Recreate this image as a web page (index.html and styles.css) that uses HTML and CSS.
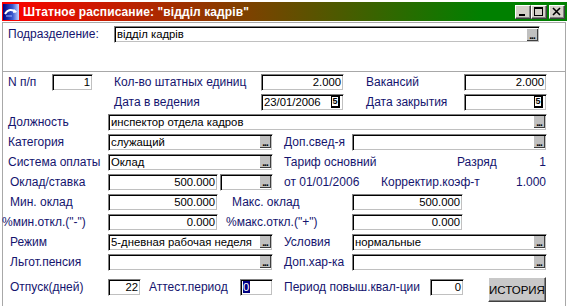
FILE: index.html
```html
<!DOCTYPE html>
<html>
<head>
<meta charset="utf-8">
<link rel="stylesheet" href="styles.css">
</head>
<body>
<div class="window">
  <div class="titlebar">
    <svg class="appicon" width="16" height="16" viewBox="0 0 16 16">
      <defs>
        <linearGradient id="ig" x1="0" y1="0" x2="1" y2="0">
          <stop offset="0" stop-color="#000080"/>
          <stop offset="0.6" stop-color="#3a5ad0"/>
          <stop offset="1" stop-color="#c8d4ff"/>
        </linearGradient>
      </defs>
      <rect x="0" y="0" width="16" height="16" fill="url(#ig)"/>
      <path d="M2 10 C5 5, 9 5, 13 8" stroke="#fff" stroke-width="2" fill="none"/>
      <path d="M11 5 L14 8 L10 9 Z" fill="#fff"/>
      <path d="M3 12 L9 12" stroke="#a0b4ff" stroke-width="1"/>
    </svg>
    <span class="title">Штатное расписание: "відділ кадрів"</span>
    <div class="wbtns">
      <span class="wbtn"><svg width="14" height="12" viewBox="0 0 14 12"><rect x="3" y="8" width="6" height="2" fill="#000"/></svg></span>
      <span class="wbtn"><svg width="14" height="12" viewBox="0 0 14 12"><rect x="2.5" y="1.5" width="8" height="8" fill="none" stroke="#000"/><rect x="2" y="1" width="9" height="2" fill="#000"/></svg></span>
      <span class="wbtn close"><svg width="14" height="12" viewBox="0 0 14 12"><path d="M3 2 L10 9 M10 2 L3 9" stroke="#000" stroke-width="1.6"/></svg></span>
    </div>
  </div>
  <div class="form">
    <div class="top">
      <span></span>
      <span class="lbl">Подразделение:</span>
      <div class="inp tinp"><span class="txt">відділ кадрів</span><span class="dots">...</span></div>
    </div>

    <div class="row r1">
      <span></span>
      <span class="lbl">N п/п</span>
      <div class="inp num"><span class="txt">1</span></div>
      <span></span>
      <span class="lbl">Кол-во штатных единиц</span>
      <div class="inp num"><span class="txt">2.000</span></div>
      <span></span>
      <span class="lbl">Вакансий</span>
      <div class="inp num"><span class="txt">2.000</span></div>
    </div>

    <div class="row r2">
      <span></span>
      <span class="lbl">Дата в ведения</span>
      <div class="inp"><span class="txt">23/01/2006</span><span class="cal">5</span></div>
      <span></span>
      <span class="lbl">Дата закрытия</span>
      <div class="inp"><span class="txt"></span><span class="cal">5</span></div>
    </div>

    <div class="row r3">
      <span></span>
      <span class="lbl">Должность</span>
      <div class="inp"><span class="txt">инспектор отдела кадров</span><span class="dots">...</span></div>
    </div>

    <div class="row r4">
      <span></span>
      <span class="lbl">Категория</span>
      <div class="inp"><span class="txt">служащий</span><span class="dots">...</span></div>
      <span></span>
      <span class="lbl">Доп.свед-я</span>
      <div class="inp"><span class="txt"></span><span class="dots">...</span></div>
    </div>

    <div class="row r5">
      <span></span>
      <span class="lbl">Система оплаты</span>
      <div class="inp"><span class="txt">Оклад</span><span class="dots">...</span></div>
      <span></span>
      <span class="lbl">Тариф основний</span>
      <span class="lbl">Разряд</span>
      <span class="lbl right">1</span>
    </div>

    <div class="row r6">
      <span></span>
      <span class="lbl">Оклад/ставка</span>
      <div class="inp num"><span class="txt">500.000</span></div>
      <span></span>
      <div class="inp"><span class="txt"></span><span class="dots">...</span></div>
      <span></span>
      <span class="lbl">от 01/01/2006</span>
      <span class="lbl">Корректир.коэф-т</span>
      <span class="lbl right">1.000</span>
    </div>

    <div class="row r7">
      <span></span>
      <span class="lbl">Мин. оклад</span>
      <div class="inp num"><span class="txt">500.000</span></div>
      <span></span>
      <span class="lbl">Макс. оклад</span>
      <div class="inp num"><span class="txt">500.000</span></div>
    </div>

    <div class="row r8">
      <span class="lbl pct">%мин.откл.("-")</span>
      <div class="inp num"><span class="txt">0.000</span></div>
      <span></span>
      <span class="lbl">%макс.откл.("+")</span>
      <div class="inp num"><span class="txt">0.000</span></div>
    </div>

    <div class="row r9">
      <span></span>
      <span class="lbl">Режим</span>
      <div class="inp"><span class="txt">5-дневная рабочая неделя</span><span class="dots">...</span></div>
      <span></span>
      <span class="lbl">Условия</span>
      <div class="inp"><span class="txt">нормальные</span><span class="dots">...</span></div>
    </div>

    <div class="row r9">
      <span></span>
      <span class="lbl">Льгот.пенсия</span>
      <div class="inp"><span class="txt"></span><span class="dots">...</span></div>
      <span></span>
      <span class="lbl">Доп.хар-ка</span>
      <div class="inp"><span class="txt"></span><span class="dots">...</span></div>
    </div>

    <div class="row r11">
      <span></span>
      <span class="lbl">Отпуск(дней)</span>
      <div class="inp num"><span class="txt">22</span></div>
      <span></span>
      <span class="lbl">Аттест.период</span>
      <div class="inp"><span class="txt"><span class="sel">0</span></span></div>
      <span></span>
      <span class="lbl">Период повыш.квал-ции</span>
      <div class="inp num"><span class="txt">0</span></div>
      <span></span>
      <button class="hist">ИСТОРИЯ</button>
    </div>
  </div>
</div>
</body>
</html>
```

FILE: styles.css
```css
* { box-sizing: border-box; }
html, body {
  margin: 0;
  padding: 0;
  width: 568px;
  height: 306px;
  overflow: hidden;
  background: #fff;
}
body {
  font-family: "Liberation Sans", Arial, sans-serif;
  font-size: 12px;
  color: #000;
}
.window {
  margin: 2px 0 0 2px;
  width: 565px;
}
.titlebar {
  height: 19px;
  display: flex;
  align-items: center;
  padding: 0 2px 0 1px;
  margin-bottom: 1px;
  background: linear-gradient(to right, #ff0000 0%, #008000 85%, #008000 100%);
}
.appicon { flex: none; display: block; }
.title {
  margin-left: 4px;
  color: #fff;
  font-weight: bold;
  font-size: 12px;
  letter-spacing: 0.1px;
  white-space: nowrap;
  flex: 1;
}
.wbtns { display: flex; gap: 0; }
.wbtn {
  width: 16px;
  height: 14px;
  background: #d4d0c8;
  border: 1px solid;
  border-color: #fff #404040 #404040 #fff;
  box-shadow: inset -1px -1px 0 #808080;
  display: flex;
  align-items: center;
  justify-content: center;
}
.wbtn svg { display: block; }
.wbtn.close { margin-left: 2px; }

.form {
  width: 564px;
  height: 284px;
  border: 1px solid #a8a8a8;
  border-bottom: none;
}
.top {
  height: 49px;
  border-bottom: 1px solid #a8a8a8;
  display: grid;
  grid-template-columns: 5px 106px 426px;
  align-items: start;
  padding-top: 3px;
}
.top .lbl { line-height: 16px; }
.tinp { height: 16px; }

.lbl {
  color: #14146e;
  white-space: nowrap;
  line-height: 14px;
}
.lbl.right { text-align: right; }
.lbl.pct { margin-left: -1px; }

.row {
  display: grid;
  height: 20px;
  align-items: center;
}
.r1 { grid-template-columns: 5px 44px 41px 21px 147px 83px 22px 98px 83px; }
.r2 { grid-template-columns: 111px 147px 83px 22px 98px 83px; }
.r3 { grid-template-columns: 5px 100px 439px; }
.r4 { grid-template-columns: 5px 100px 165px 11px 68px 195px; }
.r5 { grid-template-columns: 5px 100px 165px 11px 173px 73px 16px; }
.r6 { grid-template-columns: 7px 98px 110px 2px 53px 11px 97px 119px 46px; }
.r7 { grid-template-columns: 7px 98px 110px 14px 120px 111px; }
.r8 { grid-template-columns: 105px 110px 8px 126px 111px; }
.r9 { grid-template-columns: 7px 98px 165px 11px 68px 195px; }
.r11 { grid-template-columns: 7px 98px 33px 8px 91px 33px 11px 146px 34px 24px 58px; }

.inp {
  height: 17px;
  background: #fff;
  border-style: solid;
  border-width: 1px;
  border-color: #808080 #fff #fff #808080;
  box-shadow: inset 1px 1px 0 #000, inset -1px -1px 0 #c0c0c0;
  display: flex;
  align-items: center;
  padding: 1px 1px 1px 2px;
  overflow: hidden;
  font-size: 11.3px;
}
.inp .txt {
  flex: 1;
  white-space: nowrap;
  overflow: hidden;
  line-height: 13px;
}
.inp.num .txt { text-align: right; padding-right: 1px; }

.dots {
  flex: none;
  width: 11px;
  height: 12px;
  background: #c0c0c0;
  border-right: 1px solid #404040;
  border-bottom: 1px solid #404040;
  font-size: 10px;
  line-height: 14px;
  text-align: center;
  letter-spacing: -1px;
  overflow: hidden;
  font-weight: bold;
}
.cal {
  flex: none;
  width: 9px;
  height: 12px;
  margin-right: 2px;
  border: 1px solid #000;
  border-right-width: 2px;
  border-bottom-width: 2px;
  font-size: 9px;
  line-height: 9px;
  text-align: center;
  font-weight: bold;
}
.sel {
  background: #000080;
  color: #fff;
  padding: 0 1px;
  margin-left: -1px;
}
.hist {
  align-self: start;
  margin-top: 5px;
  width: 58px;
  height: 25px;
  padding: 0;
  background: #c8c8c8;
  border: 1px solid;
  border-color: #fff #404040 #404040 #fff;
  box-shadow: inset -1px -1px 0 #808080;
  font-family: "Liberation Sans", Arial, sans-serif;
  font-size: 11.5px;
  color: #000;
}
```
